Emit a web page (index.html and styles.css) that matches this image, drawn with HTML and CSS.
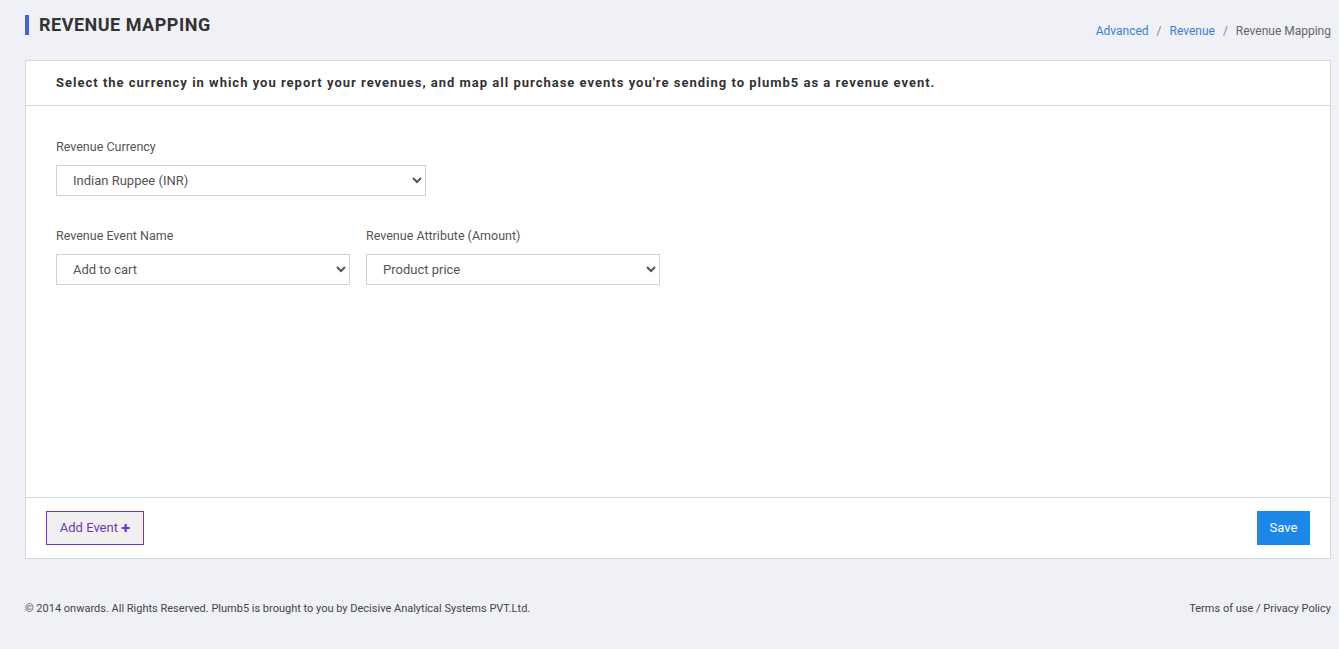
FILE: index.html
```html
<!DOCTYPE html>
<html lang="en">
<head>
    <meta charset="UTF-8">
    <meta name="viewport" content="width=device-width, initial-scale=1.0">
    <title>Revenue Mapping</title>
    <link rel="stylesheet" href="styles.css">
</head>
<body>
    <div class="page">
        <div class="page-head">
            <h1 class="page-title">REVENUE MAPPING</h1>
            <ul class="breadcrumb">
                <li><a href="#">Advanced</a></li>
                <li class="sep">/</li>
                <li><a href="#">Revenue</a></li>
                <li class="sep">/</li>
                <li class="current">Revenue Mapping</li>
            </ul>
        </div>

        <div class="panel">
            <div class="panel-head">
                Select the currency in which you report your revenues, and map all purchase events you're sending to plumb5 as a revenue event.
            </div>

            <div class="panel-body">
                <div class="field currency">
                    <label>Revenue Currency</label>
                    <select>
                        <option>Indian Ruppee (INR)</option>
                    </select>
                </div>

                <div class="field-row">
                    <div class="field">
                        <label>Revenue Event Name</label>
                        <select>
                            <option>Add to cart</option>
                        </select>
                    </div>
                    <div class="field">
                        <label>Revenue Attribute (Amount)</label>
                        <select>
                            <option>Product price</option>
                        </select>
                    </div>
                </div>
            </div>

            <div class="panel-foot">
                <button class="btn-add">Add Event <span class="plus">&#10010;</span></button>
                <button class="btn-save">Save</button>
            </div>
        </div>

        <div class="page-foot">
            <span>&copy; 2014 onwards. All Rights Reserved. Plumb5 is brought to you by Decisive Analytical Systems PVT.Ltd.</span>
            <span>Terms of use / Privacy Policy</span>
        </div>
    </div>
</body>
</html>
```

FILE: styles.css
```css
:root {
    --page-bg: #f0f1f6;
    --border: #d3d7de;
    --text: #333;
    --muted: #555;
    --link: #3b7ddd;
    --purple: #7234c4;
    --blue: #1b87e6;
}

* {
    margin: 0;
    padding: 0;
    box-sizing: border-box;
}

body {
    font-family: Roboto, 'Liberation Sans', sans-serif;
    background-color: var(--page-bg);
    color: var(--text);
}

.page {
    padding: 0 8px 0 25px;
}

.page-head {
    display: flex;
    justify-content: space-between;
    align-items: flex-start;
    height: 60px;
    padding-top: 15px;
}

.page-title {
    font-size: 18px;
    font-weight: 700;
    letter-spacing: 0.5px;
    color: #333;
    border-left: 4px solid #4a5fd6;
    padding-left: 10px;
    line-height: 20px;
}

.breadcrumb {
    list-style: none;
    display: flex;
    gap: 7px;
    font-size: 12px;
    padding-top: 9px;
    color: #666;
}

.breadcrumb a {
    color: var(--link);
    text-decoration: none;
}

.breadcrumb .sep {
    color: #888;
    padding: 0 1px;
}

.panel {
    background-color: white;
    border: 1px solid var(--border);
}

.panel-head {
    height: 45px;
    padding: 14px 30px 0;
    font-size: 13px;
    font-weight: 700;
    letter-spacing: 1px;
    color: #333;
    border-bottom: 1px solid var(--border);
}

.panel-body {
    height: 392px;
    padding: 33px 30px 0;
    border-bottom: 1px solid var(--border);
}

.field label {
    display: block;
    font-size: 12.5px;
    color: var(--muted);
    margin-bottom: 11px;
}

.field select {
    height: 31px;
    width: 294px;
    border: 1px solid #cfd3d9;
    background-color: white;
    font-family: Roboto, 'Liberation Sans', sans-serif;
    font-size: 13px;
    color: #555;
    padding: 0 8px 0 12px;
}

.field.currency select {
    width: 370px;
}

.field-row {
    display: flex;
    gap: 16px;
    margin-top: 32px;
}

.panel-foot {
    height: 60px;
    display: flex;
    justify-content: space-between;
    align-items: center;
    padding: 0 20px 0 20px;
}

.btn-add {
    height: 34px;
    width: 98px;
    border: 1px solid var(--purple);
    background-color: #f0f0f0;
    color: #6a3bb0;
    font-family: Roboto, 'Liberation Sans', sans-serif;
    font-size: 13px;
    padding-bottom: 2px;
    cursor: pointer;
}

.btn-add .plus {
    font-size: 11px;
    color: var(--purple);
}

.btn-save {
    height: 34px;
    width: 53px;
    border: none;
    background-color: var(--blue);
    color: white;
    font-family: Roboto, 'Liberation Sans', sans-serif;
    font-size: 13px;
    padding-bottom: 2px;
    cursor: pointer;
}

.page-foot {
    display: flex;
    justify-content: space-between;
    padding-top: 43px;
    font-size: 11px;
    color: #444;
}
```
